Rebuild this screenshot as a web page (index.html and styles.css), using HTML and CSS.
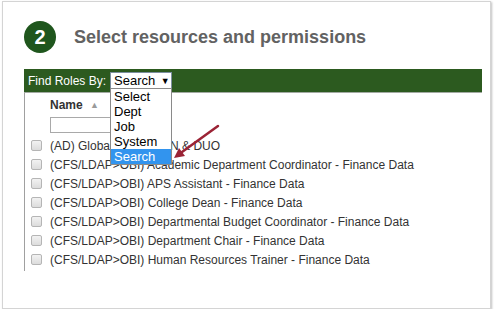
FILE: index.html
```html
<!DOCTYPE html>
<html lang="en">
<head>
    <meta charset="UTF-8">
    <title>Select resources and permissions</title>
    <link rel="stylesheet" href="styles.css">
</head>
<body>
    <div class="card">
        <div class="step-head">
            <span class="step-num">2</span>
            <h2>Select resources and permissions</h2>
        </div>

        <div class="roles">
            <div class="roles-bar">
                <span class="bar-label">Find Roles By:</span>
                <div class="picker">
                    <div class="picker-box">Search <span class="caret">&#9660;</span></div>
                    <ul class="picker-list">
                        <li>Select</li>
                        <li>Dept</li>
                        <li>Job</li>
                        <li>System</li>
                        <li class="active">Search</li>
                    </ul>
                </div>
            </div>
            <div class="roles-body">
                <div class="col-head">Name <span class="sort">&#9650;</span></div>
                <input type="text" class="filter">
                <ul class="role-list">
                    <li><input type="checkbox"> (AD) GlobalProtect VPN &amp; DUO</li>
                    <li><input type="checkbox"> (CFS/LDAP&gt;OBI) Academic Department Coordinator - Finance Data</li>
                    <li><input type="checkbox"> (CFS/LDAP&gt;OBI) APS Assistant - Finance Data</li>
                    <li><input type="checkbox"> (CFS/LDAP&gt;OBI) College Dean - Finance Data</li>
                    <li><input type="checkbox"> (CFS/LDAP&gt;OBI) Departmental Budget Coordinator - Finance Data</li>
                    <li><input type="checkbox"> (CFS/LDAP&gt;OBI) Department Chair - Finance Data</li>
                    <li><input type="checkbox"> (CFS/LDAP&gt;OBI) Human Resources Trainer - Finance Data</li>
                </ul>
            </div>
        </div>
    </div>

    <!-- annotation arrow pointing at the Search option -->
    <svg class="pointer" width="497" height="312" viewBox="0 0 497 312">
        <line x1="218" y1="126" x2="182" y2="152" stroke="#9b2335" stroke-width="2.5" stroke-linecap="round"/>
        <polygon points="174,158 185,156 179,148" fill="#9b2335"/>
    </svg>
</body>
</html>
```

FILE: styles.css
```css
:root {
    --green: #1f561d;
    --bar-green: #2c5a1f;
    --title-gray: #626262;
    --text-color: #333333;
    --line-gray: #a0a0a0;
    --pick-blue: #3294ee;
}

body {
    margin: 0;
    background: #ffffff;
    font-family: "Liberation Sans", Arial, sans-serif;
    color: var(--text-color);
}

.card {
    box-sizing: border-box;
    width: 489px;
    height: 308px;
    margin: 1px 0 0 2px;
    padding: 19px 8px 0 21px;
    border: 1px solid #d4d4d4;
    box-shadow: 1px 1px 2px rgba(0, 0, 0, 0.25);
    background: #ffffff;
}

.step-head {
    display: flex;
    align-items: center;
    gap: 18px;
    height: 32px;
    margin-bottom: 16px;
}

.step-num {
    width: 32px;
    height: 32px;
    border-radius: 50%;
    background: var(--green);
    color: #ffffff;
    font-weight: 700;
    font-size: 20px;
    display: flex;
    align-items: center;
    justify-content: center;
}

h2 {
    margin: 0;
    font-size: 18px;
    font-weight: 700;
    color: var(--title-gray);
}

.roles-bar {
    display: flex;
    align-items: center;
    height: 23px;
    padding-left: 4px;
    background: var(--bar-green);
    border-bottom: 1px solid #a3aaa3;
}

.bar-label {
    flex: none;
    width: 82px;
    color: #ffffff;
    font-size: 12px;
    white-space: nowrap;
}

.picker {
    position: relative;
}

.picker-box {
    box-sizing: border-box;
    width: 62px;
    height: 17px;
    padding-left: 3px;
    background: #ffffff;
    border: 1px solid #7d8fa0;
    color: #000000;
    font-size: 13px;
    line-height: 15px;
    white-space: nowrap;
}

.caret {
    font-size: 9px;
    margin-left: 2px;
    vertical-align: 1px;
}

.picker-list {
    position: absolute;
    top: 16px;
    left: 0;
    box-sizing: border-box;
    width: 62px;
    margin: 0;
    padding: 0;
    list-style: none;
    background: #ffffff;
    border: 1px solid #8a8a8a;
    z-index: 2;
}

.picker-list li {
    height: 15px;
    padding-left: 3px;
    font-size: 13px;
    line-height: 15px;
    color: #000000;
}

.picker-list li.active {
    background: var(--pick-blue);
    color: #ffffff;
}

.roles-body {
    height: 178px;
    padding-top: 4px;
    box-sizing: border-box;
    border-left: 1px solid var(--line-gray);
    overflow: hidden;
}

.col-head {
    padding-left: 25px;
    font-size: 12px;
    font-weight: 700;
    line-height: 16px;
}

.sort {
    font-size: 9px;
    color: #9a9a9a;
    margin-left: 4px;
    vertical-align: 1px;
}

.filter {
    display: block;
    box-sizing: border-box;
    width: 110px;
    height: 16px;
    margin: 4px 0 0 25px;
    border: 1px solid #a9a9a9;
}

.role-list {
    margin: 3px 0 0;
    padding: 0;
    list-style: none;
}

.role-list li {
    display: flex;
    align-items: center;
    height: 19px;
    padding-left: 6px;
    font-size: 12px;
    white-space: nowrap;
}

.role-list input {
    appearance: none;
    box-sizing: border-box;
    width: 11px;
    height: 11px;
    margin: 0 8px 0 0;
    border: 1px solid #b5b5b5;
    border-radius: 2px;
    background: linear-gradient(#f2f2f2, #dcdcdc);
}

.pointer {
    position: absolute;
    top: 0;
    left: 0;
    pointer-events: none;
    z-index: 3;
}
```
